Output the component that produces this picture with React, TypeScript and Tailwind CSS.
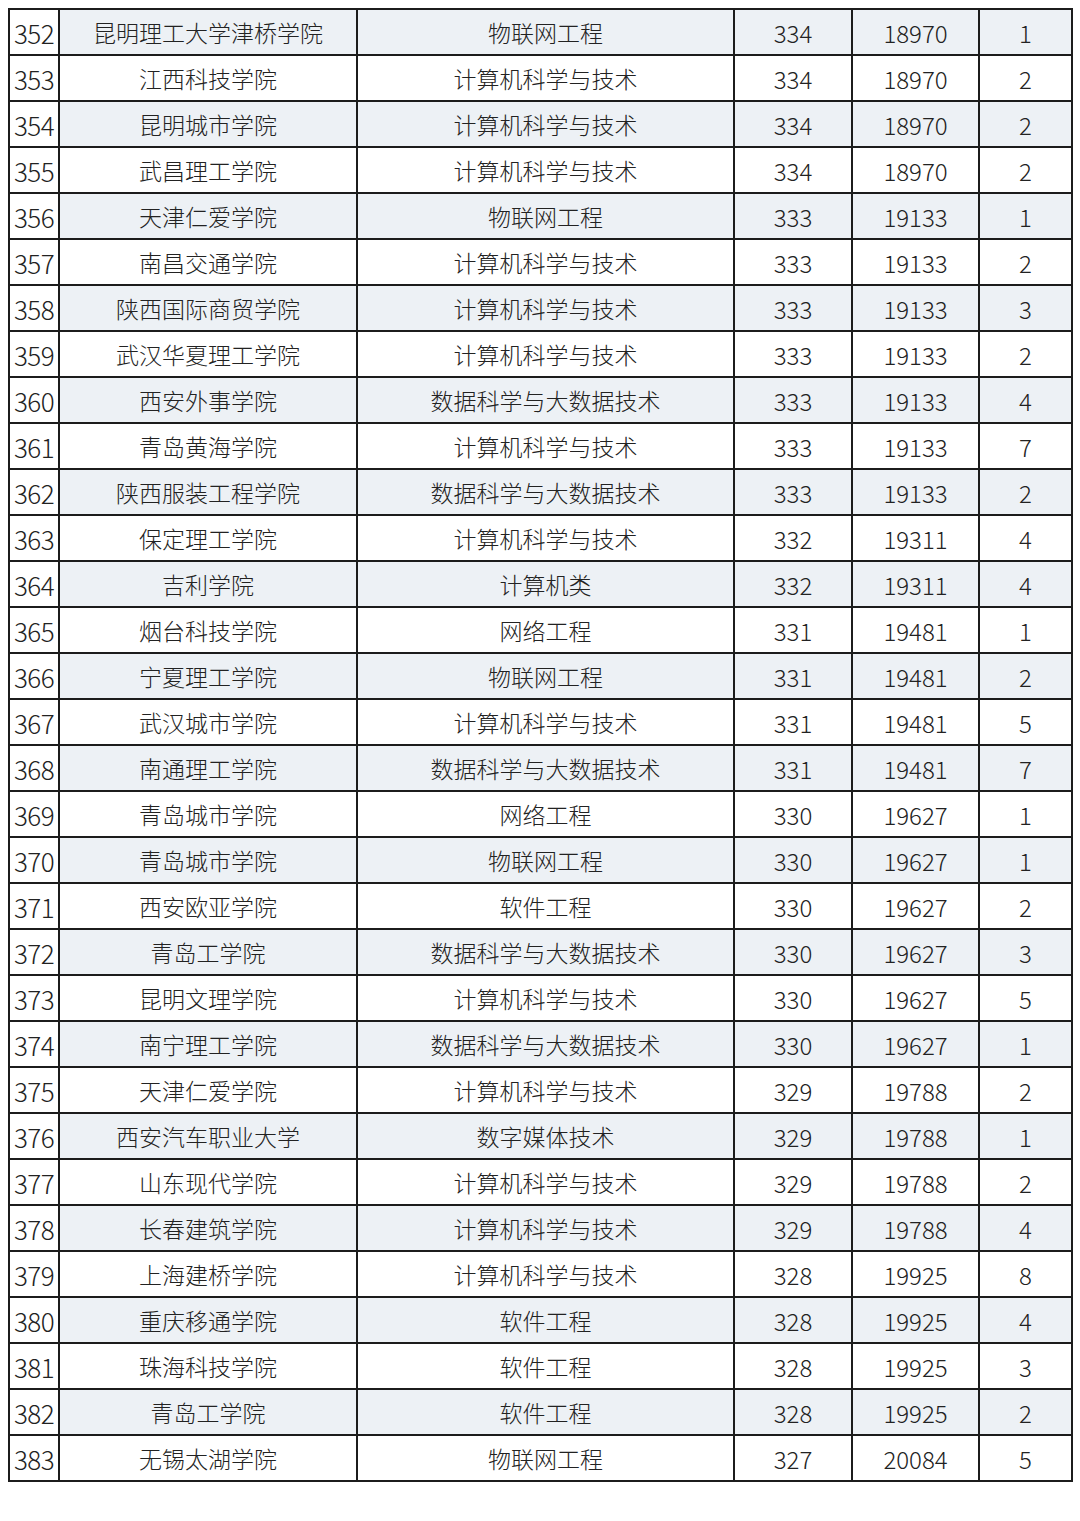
const rows: [number, string, string, number, number, number][] = [
  [352, "昆明理工大学津桥学院", "物联网工程", 334, 18970, 1],
  [353, "江西科技学院", "计算机科学与技术", 334, 18970, 2],
  [354, "昆明城市学院", "计算机科学与技术", 334, 18970, 2],
  [355, "武昌理工学院", "计算机科学与技术", 334, 18970, 2],
  [356, "天津仁爱学院", "物联网工程", 333, 19133, 1],
  [357, "南昌交通学院", "计算机科学与技术", 333, 19133, 2],
  [358, "陕西国际商贸学院", "计算机科学与技术", 333, 19133, 3],
  [359, "武汉华夏理工学院", "计算机科学与技术", 333, 19133, 2],
  [360, "西安外事学院", "数据科学与大数据技术", 333, 19133, 4],
  [361, "青岛黄海学院", "计算机科学与技术", 333, 19133, 7],
  [362, "陕西服装工程学院", "数据科学与大数据技术", 333, 19133, 2],
  [363, "保定理工学院", "计算机科学与技术", 332, 19311, 4],
  [364, "吉利学院", "计算机类", 332, 19311, 4],
  [365, "烟台科技学院", "网络工程", 331, 19481, 1],
  [366, "宁夏理工学院", "物联网工程", 331, 19481, 2],
  [367, "武汉城市学院", "计算机科学与技术", 331, 19481, 5],
  [368, "南通理工学院", "数据科学与大数据技术", 331, 19481, 7],
  [369, "青岛城市学院", "网络工程", 330, 19627, 1],
  [370, "青岛城市学院", "物联网工程", 330, 19627, 1],
  [371, "西安欧亚学院", "软件工程", 330, 19627, 2],
  [372, "青岛工学院", "数据科学与大数据技术", 330, 19627, 3],
  [373, "昆明文理学院", "计算机科学与技术", 330, 19627, 5],
  [374, "南宁理工学院", "数据科学与大数据技术", 330, 19627, 1],
  [375, "天津仁爱学院", "计算机科学与技术", 329, 19788, 2],
  [376, "西安汽车职业大学", "数字媒体技术", 329, 19788, 1],
  [377, "山东现代学院", "计算机科学与技术", 329, 19788, 2],
  [378, "长春建筑学院", "计算机科学与技术", 329, 19788, 4],
  [379, "上海建桥学院", "计算机科学与技术", 328, 19925, 8],
  [380, "重庆移通学院", "软件工程", 328, 19925, 4],
  [381, "珠海科技学院", "软件工程", 328, 19925, 3],
  [382, "青岛工学院", "软件工程", 328, 19925, 2],
  [383, "无锡太湖学院", "物联网工程", 327, 20084, 5],
]

export default function App() {
  return (
    <div className="w-[1080px] h-[1521px] bg-white pt-[8px] pl-[8px] text-[#222] font-['Noto_Sans_CJK_SC','Noto_Sans',sans-serif] font-light">
      <div className="w-[1065px] border-l-2 border-t-2 border-[#1c1c1c]">
        {rows.map((r, i) => {
          const shade = i % 2 === 0 ? "bg-[#edf1f5]" : "bg-white"
          return (
            <div
              key={r[0]}
              className="grid grid-cols-[50px_298px_377px_118px_127px_93px] h-[46px]"
            >
              <div className="flex items-center justify-center pt-[2px] border-r-2 border-b-2 border-[#1c1c1c] bg-white text-[26px] leading-none tracking-[-0.5px]">
                {r[0]}
              </div>
              <div className={`flex items-center justify-center border-r-2 border-b-2 border-[#1c1c1c] text-[23px] leading-none ${shade}`}>
                {r[1]}
              </div>
              <div className={`flex items-center justify-center border-r-2 border-b-2 border-[#1c1c1c] text-[23px] leading-none ${shade}`}>
                {r[2]}
              </div>
              <div className={`flex items-center justify-center pt-[2px] border-r-2 border-b-2 border-[#1c1c1c] text-[24px] leading-none ${shade}`}>
                {r[3]}
              </div>
              <div className={`flex items-center justify-center pt-[2px] border-r-2 border-b-2 border-[#1c1c1c] text-[24px] leading-none ${shade}`}>
                {r[4]}
              </div>
              <div className={`flex items-center justify-center pt-[2px] border-r-2 border-b-2 border-[#1c1c1c] text-[24px] leading-none ${shade}`}>
                {r[5]}
              </div>
            </div>
          )
        })}
      </div>
    </div>
  )
}
